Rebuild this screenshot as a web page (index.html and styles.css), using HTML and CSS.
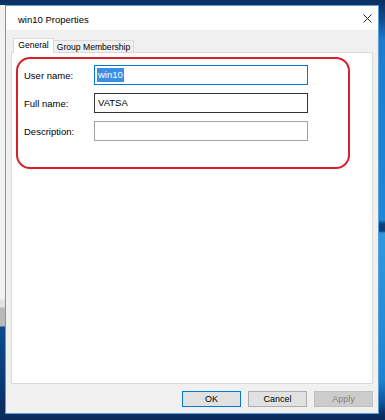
FILE: index.html
```html
<!DOCTYPE html>
<html lang="en">
<head>
    <meta charset="UTF-8">
    <meta name="viewport" content="width=device-width, initial-scale=1.0">
    <title>win10 Properties</title>
    <link rel="stylesheet" href="styles.css">
</head>
<body>
    <div class="desktop">
        <!-- window behind the dialog, only its edge shows -->
        <div class="behind"></div>

        <div class="dialog">
            <div class="titlebar">
                <span class="title">win10 Properties</span>
                <span class="close">
                    <svg width="9" height="9" viewBox="0 0 9 9">
                        <path d="M0.5 0.5 L8.5 8.5 M8.5 0.5 L0.5 8.5" stroke="#222" stroke-width="1" fill="none"/>
                    </svg>
                </span>
            </div>

            <div class="client">
                <div class="tabs">
                    <div class="tab active">General</div>
                    <div class="tab">Group Membership</div>
                </div>

                <div class="panel">
                    <div class="marked">
                        <div class="row">
                            <label>User name:</label>
                            <div class="field focus"><span class="sel">win10</span></div>
                        </div>
                        <div class="row">
                            <label>Full name:</label>
                            <div class="field hover">VATSA</div>
                        </div>
                        <div class="row">
                            <label>Description:</label>
                            <div class="field"></div>
                        </div>
                    </div>
                </div>

                <div class="buttons">
                    <div class="btn default">OK</div>
                    <div class="btn">Cancel</div>
                    <div class="btn disabled">Apply</div>
                </div>
            </div>
        </div>
    </div>
</body>
</html>
```

FILE: styles.css
```css
* {
    box-sizing: border-box;
}
body {
    margin: 0;
    font-family: "Liberation Sans", Arial, sans-serif;
    font-size: 9.5px;
    color: #000;
}
.desktop {
    width: 385px;
    height: 420px;
    display: flex;
    padding-top: 5px;
    background: linear-gradient(to bottom, #0c2f60 0px, #0f4a8c 18px, #1a7cd0 40px, #1c88d8 220px, #0b3d78 224px, #0b3d78 231px, #2a9be2 233px, #1d84d2 380px, #0f4f96 405px, #0a2f62 414px, #08285a 420px);
}
.behind {
    width: 5px;
    height: 409px;
    background: linear-gradient(to bottom, #f2f2f2 0px, #f2f2f2 294px, #e2e2e2 295px, #e2e2e2 302px, #b9b9b9 303px, #b9b9b9 321px, #0d4a8e 322px, #0a3a74 380px, #082a5c 409px);
}

/* Dialog window */
.dialog {
    width: 374px;
    height: 409px;
    border: 1px solid #5d9ed8;
    display: flex;
    flex-direction: column;
}
.titlebar {
    height: 24px;
    background: #fff;
    display: flex;
    align-items: center;
    justify-content: space-between;
    padding: 0 6px 0 12px;
}
.title {
    padding-top: 2px;
}
.close {
    display: flex;
    margin-top: 1px;
}
.client {
    flex: 1;
    background: #f0f0f0;
    padding: 8px 5px 6px 5px;
    display: flex;
    flex-direction: column;
}

/* Tabs */
.tabs {
    display: flex;
    align-items: flex-end;
    padding-left: 2px;
    margin-bottom: -1px;
    font-size: 8.6px;
}
.tab {
    height: 13px;
    width: 80px;
    border: 1px solid #d9d9d9;
    border-bottom: none;
    border-left: none;
    text-align: center;
    line-height: 12px;
    background: #f0f0f0;
}
.tab.active {
    position: relative;
    z-index: 1;
    width: 41px;
    height: 15px;
    border-left: 1px solid #d9d9d9;
    background: #fff;
    line-height: 13px;
}
.panel {
    height: 332px;
    background: #fff;
    border: 1px solid #d9d9d9;
}

/* Red annotation drawn round the fields */
.marked {
    width: 334px;
    height: 112px;
    margin: 4px 0 0 4px;
    border: 2px solid #d7202b;
    border-radius: 14px;
    padding: 6px 0 0 6px;
    display: flex;
    flex-direction: column;
    gap: 8px;
}
.row {
    display: flex;
    align-items: center;
}
.row label {
    width: 70px;
}
.field {
    width: 214px;
    height: 20px;
    border: 1px solid #a0a0a0;
    padding: 0 3px;
    line-height: 18px;
    background: #fff;
}
.field.focus {
    border-color: #0078d7;
    padding-left: 2px;
}
.field.hover {
    border-color: #333;
}
.sel {
    background: #3a8ee6;
    color: #fff;
    padding: 1px 1px 2px 1px;
}

/* Bottom buttons */
.buttons {
    display: flex;
    justify-content: flex-end;
    gap: 7px;
    margin-top: 7px;
    font-size: 9px;
}
.btn {
    width: 59px;
    height: 16px;
    border: 1px solid #adadad;
    background: #e1e1e1;
    text-align: center;
    line-height: 14px;
}
.btn.default {
    border-color: #0078d7;
}
.btn.disabled {
    border-color: #bfbfbf;
    background: #cccccc;
    color: #838383;
}
```
